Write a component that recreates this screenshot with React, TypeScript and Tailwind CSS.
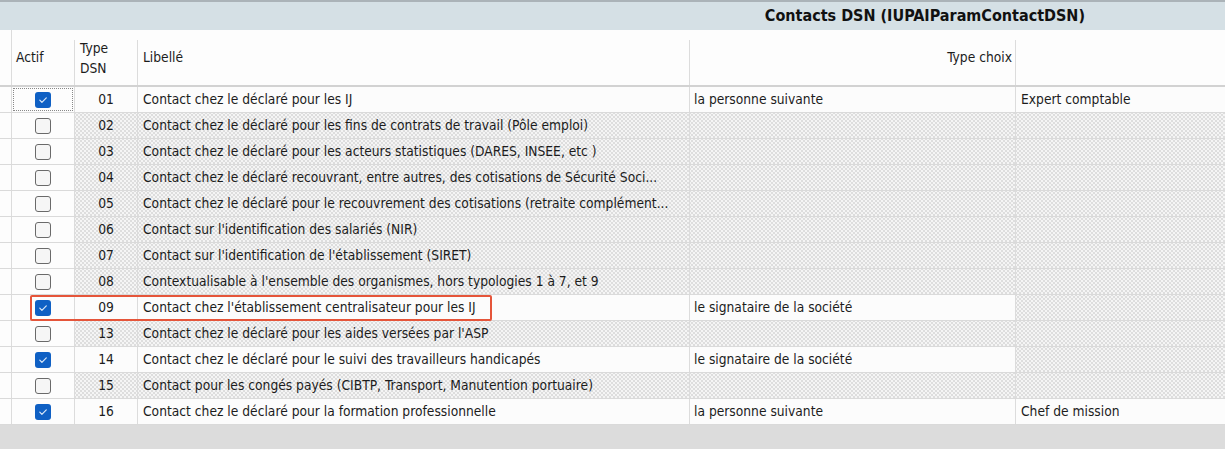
import React from 'react';

interface Row {
  code: string;
  label: string;
  active: boolean;
  choice?: string;
  extra?: string;
}

const rows: Row[] = [
  { code: '01', label: 'Contact chez le déclaré pour les IJ', active: true, choice: 'la personne suivante', extra: 'Expert comptable' },
  { code: '02', label: 'Contact chez le déclaré pour les fins de contrats de travail (Pôle emploi)', active: false },
  { code: '03', label: 'Contact chez le déclaré pour les acteurs statistiques (DARES, INSEE, etc )', active: false },
  { code: '04', label: 'Contact chez le déclaré recouvrant, entre autres, des cotisations de Sécurité Soci...', active: false },
  { code: '05', label: 'Contact chez le déclaré pour le recouvrement des cotisations (retraite complément...', active: false },
  { code: '06', label: "Contact sur l'identification des salariés (NIR)", active: false },
  { code: '07', label: "Contact sur l'identification de l'établissement (SIRET)", active: false },
  { code: '08', label: "Contextualisable à l'ensemble des organismes, hors typologies 1 à 7, et 9", active: false },
  { code: '09', label: "Contact chez l'établissement centralisateur pour les IJ", active: true, choice: 'le signataire de la société' },
  { code: '13', label: "Contact chez le déclaré pour les aides versées par l'ASP", active: false },
  { code: '14', label: 'Contact chez le déclaré pour le suivi des travailleurs handicapés', active: true, choice: 'le signataire de la société' },
  { code: '15', label: 'Contact pour les congés payés (CIBTP, Transport, Manutention portuaire)', active: false },
  { code: '16', label: 'Contact chez le déclaré pour la formation professionnelle', active: true, choice: 'la personne suivante', extra: 'Chef de mission' },
];

// read-only cells get the dotted texture
const dots =
  'bg-[#f5f5f5] bg-[radial-gradient(circle,#cfcfcf_0.55px,transparent_0.95px),radial-gradient(circle,#cfcfcf_0.55px,transparent_0.95px)] bg-size-[4px_4px] bg-position-[0_0,2px_2px]';
const plain = 'bg-[#fcfcfc]';

const Checkbox: React.FC<{ checked: boolean }> = ({ checked }) =>
  checked ? (
    <span className="w-4 h-4 rounded-[3px] bg-[#0f60c4] flex items-center justify-center">
      <svg width="12" height="12" viewBox="0 0 12 12" fill="none">
        <path d="M2.8 6.2l2.1 2.1L9.3 3.9" stroke="#dbe8f8" strokeWidth="1.2" strokeLinecap="round" strokeLinejoin="round" />
      </svg>
    </span>
  ) : (
    <span className="w-4 h-4 rounded-[3px] border-[1.5px] border-[#6a6a6a] bg-[#f6f6f6]" />
  );

const cols = 'grid grid-cols-[12px_63px_63px_552px_326px_1fr]';
const line = 'border-r border-[#dcdcdc]';
const headLine =
  "relative after:content-[''] after:absolute after:right-0 after:top-[10px] after:bottom-0 after:w-px after:bg-[#dcdcdc]";

export default function App() {
  return (
    <div className="w-[1225px] h-[449px] overflow-hidden bg-[#dcdcdc] flex flex-col font-['DejaVu_Sans_Condensed','DejaVu_Sans',sans-serif] text-[13.7px] text-[#1c1c1c]">
      {/* title bar */}
      <div className="h-[30px] shrink-0 border-t-2 border-[#abb3b8] bg-[#d5e0e5] flex items-center justify-end pr-[140px]">
        <span className="font-bold text-[16px] text-[#111]">Contacts DSN (IUPAIParamContactDSN)</span>
      </div>

      {/* column headers */}
      <div className={`${cols} h-[57px] shrink-0 bg-[#fdfdfd] border-b-2 border-[#d2d2d2]`}>
        <div className={line} />
        <div className={`${headLine} flex items-center pl-1`}>Actif</div>
        <div className={`${headLine} flex items-center pl-[5px] leading-[20px]`}>
          Type
          <br />
          DSN
        </div>
        <div className={`${headLine} flex items-center pl-[5px]`}>Libellé</div>
        <div className={`${headLine} flex items-center justify-end pr-1`}>Type choix</div>
        <div />
      </div>

      {/* rows */}
      {rows.map((r, i) => {
        const ro = r.active ? plain : dots;
        return (
          <div key={r.code} className={`${cols} h-[26px] shrink-0 border-b border-[#dadada] relative`}>
            <div className={`${line} bg-[#fdfdfd]`} />
            <div className={`${line} bg-[#fdfdfd] flex items-center justify-center`}>
              {i === 0 ? (
                <div className="w-[60px] h-[23px] border border-dotted border-[#888] flex items-center justify-center">
                  <Checkbox checked={r.active} />
                </div>
              ) : (
                <Checkbox checked={r.active} />
              )}
            </div>
            <div className={`${line} ${ro} flex items-center justify-center`}>{r.code}</div>
            <div className={`${line} ${ro} flex items-center pl-[5px] whitespace-nowrap overflow-hidden`}>{r.label}</div>
            <div className={`${line} ${ro} flex items-center pl-1 whitespace-nowrap overflow-hidden`}>{r.choice}</div>
            <div className={`${r.extra ? plain : dots} flex items-center pl-[5px] whitespace-nowrap overflow-hidden`}>{r.extra}</div>
            {r.code === '09' && (
              <div className="absolute left-[30px] top-0 w-[462px] h-[26px] border-2 border-[#e5553a] rounded-[2px] pointer-events-none" />
            )}
          </div>
        );
      })}
    </div>
  );
}
